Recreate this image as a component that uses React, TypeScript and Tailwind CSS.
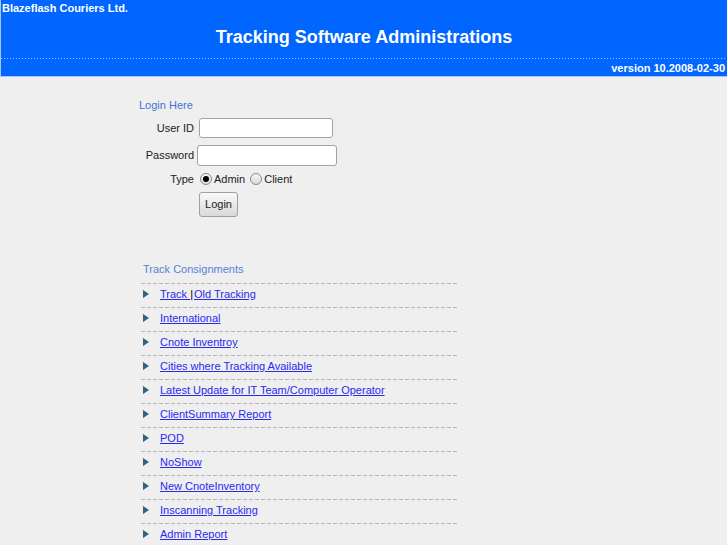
import type { ReactNode } from "react";

const LINKS: ReactNode[] = [
  <>
    <a href="#" className="underline">Track </a>
    <span className="text-black">|</span>
    <a href="#" className="ml-px underline">Old Tracking</a>
  </>,
  <a href="#" className="underline">International</a>,
  <a href="#" className="underline">Cnote Inventroy</a>,
  <a href="#" className="underline">Cities where Tracking Available</a>,
  <a href="#" className="underline">Latest Update for IT Team/Computer Operator</a>,
  <a href="#" className="underline">ClientSummary Report</a>,
  <a href="#" className="underline">POD</a>,
  <a href="#" className="underline">NoShow</a>,
  <a href="#" className="underline">New CnoteInventory</a>,
  <a href="#" className="underline">Inscanning Tracking</a>,
  <a href="#" className="underline">Admin Report</a>,
];

function Radio({ checked }: { checked?: boolean }) {
  return (
    <span className="flex size-[12px] items-center justify-center rounded-full border border-[#8a8a8a] bg-gradient-to-b from-[#f4f4f4] to-[#dcdcdc]">
      {checked && <span className="size-[6px] rounded-full bg-black" />}
    </span>
  );
}

function Dashes() {
  return (
    <div className="h-px w-full bg-[repeating-linear-gradient(90deg,#b4b4b4_0_4px,transparent_4px_6px)]" />
  );
}

export default function App() {
  return (
    <div className="min-h-[545px] bg-[#efefef] font-['Liberation_Sans',Arial,sans-serif] text-[11px] text-[#222]">
      {/* Header */}
      <header className="flex h-[77px] flex-col border-b border-l border-[#a9c6f5] bg-[#0066ff] font-bold text-white">
        <div className="h-[16px] pl-[1px] pt-px leading-[14px]">Blazeflash Couriers Ltd.</div>
        <div className="mt-[10px] text-center text-[18px] leading-[22px]">
          Tracking Software Administrations
        </div>
        <div className="mt-[10px] h-px w-full bg-[repeating-linear-gradient(90deg,#9ec3ff_0_1px,transparent_1px_3px)]" />
        <div className="mt-[2px] pr-[2px] text-right leading-[14px]">version 10.2008-02-30</div>
      </header>

      {/* Login */}
      <section className="ml-[139px] mt-[21px] flex flex-col">
        <div className="leading-[14px] text-[#3f74d6]">Login Here</div>
        <div className="mt-[6px] flex items-center">
          <span className="w-[55px] text-right">User ID</span>
          <input className="ml-[5px] h-[20px] w-[134px] rounded-[3px] border border-[#a3a3a3] bg-white outline-none" />
        </div>
        <div className="mt-[7px] flex items-center">
          <span className="w-[55px] text-right">Password</span>
          <input
            type="password"
            className="ml-[3px] h-[21px] w-[140px] rounded-[3px] border border-[#a3a3a3] bg-white outline-none"
          />
        </div>
        <div className="mt-[6px] flex h-[14px] items-center leading-[14px]">
          <span className="w-[55px] text-right">Type</span>
          <span className="ml-[6px]">
            <Radio checked />
          </span>
          <span className="ml-[2px]">Admin</span>
          <span className="ml-[5px]">
            <Radio />
          </span>
          <span className="ml-[2px]">Client</span>
        </div>
        <div className="mt-[6px] flex">
          <button className="ml-[60px] h-[25px] w-[39px] rounded-[3px] border border-[#a0a0a0] bg-gradient-to-b from-[#fafafa] to-[#d9d9d9] text-[11px] text-[#222]">
            Login
          </button>
        </div>
      </section>

      {/* Track Consignments */}
      <section className="ml-[141px] mt-[45px] flex w-[317px] flex-col">
        <div className="pl-[2px] leading-[14px] text-[#5583d6]">Track Consignments</div>
        <div className="mt-[7px] flex flex-col">
          {LINKS.map((link, i) => (
            <div key={i} className="flex flex-col">
              <Dashes />
              <div className="flex h-[23px] items-center pb-[3px] pl-[2px] text-[#2a2aee]">
                <svg width="6" height="8" viewBox="0 0 6 8" className="shrink-0">
                  <path d="M0 0L6 4L0 8Z" fill="#2f6283" />
                </svg>
                <span className="ml-[11px] leading-[14px]">{link}</span>
              </div>
            </div>
          ))}
        </div>
      </section>
    </div>
  );
}
